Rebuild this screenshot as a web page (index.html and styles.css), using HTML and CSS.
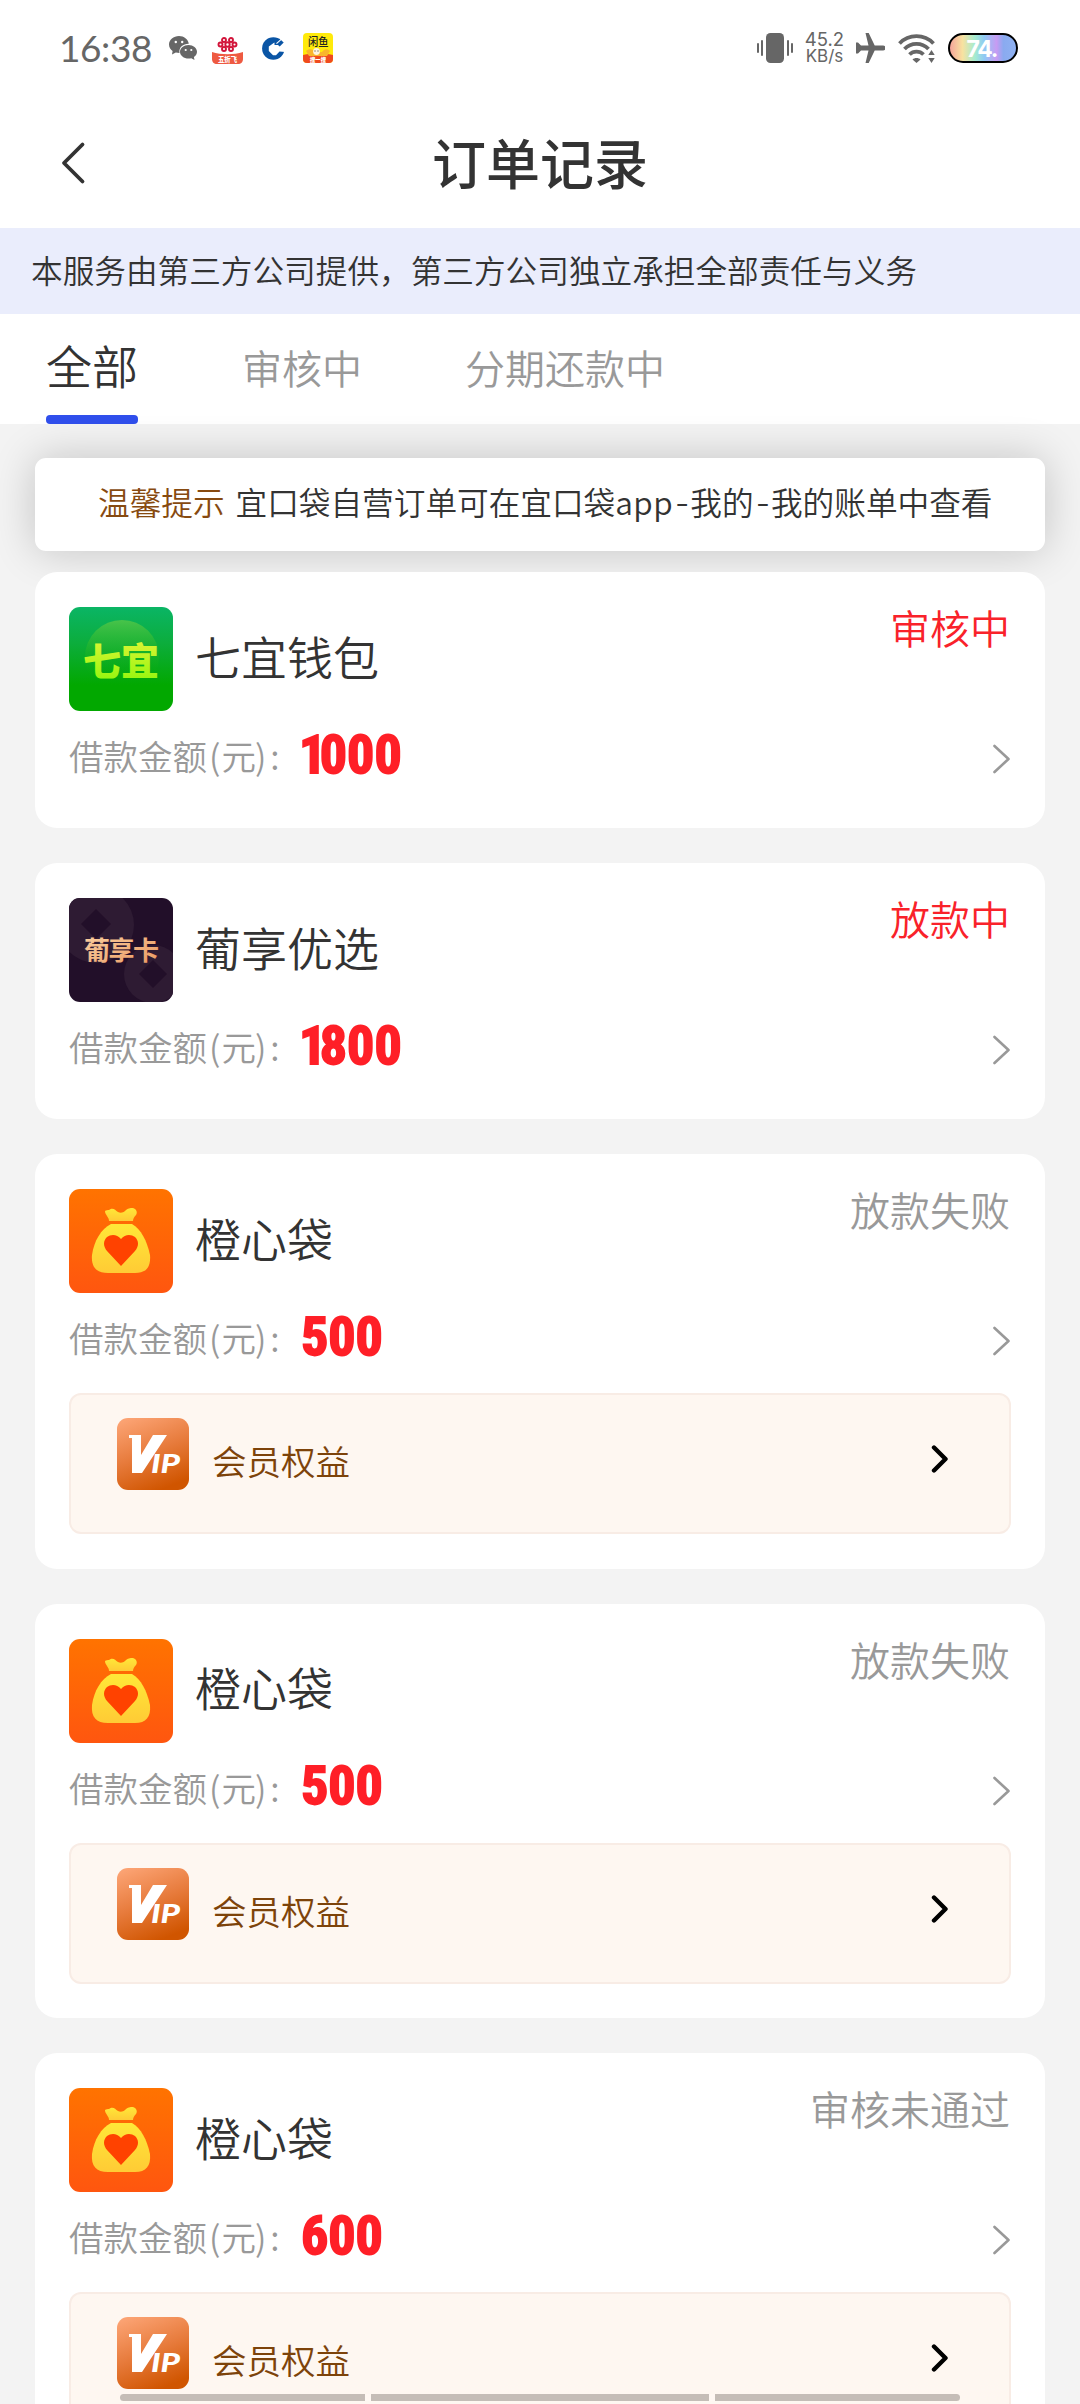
FILE: index.html
```html
<!DOCTYPE html>
<html lang="zh-CN">
<head>
<meta charset="utf-8">
<title>订单记录</title>
<link rel="stylesheet" href="styles.css">
</head>
<body>
<svg class="defs" width="0" height="0" aria-hidden="true">
  <defs>
    <linearGradient id="g-green" x1="0" y1="0" x2="0" y2="1"><stop offset="0" stop-color="#0ab565"/><stop offset=".35" stop-color="#0cad3c"/><stop offset=".75" stop-color="#02a800"/><stop offset="1" stop-color="#02a800"/></linearGradient>
    <linearGradient id="g-halo" x1="0" y1="0" x2="0" y2="1"><stop offset="0" stop-color="#49c34a"/><stop offset=".8" stop-color="#04aa08" stop-opacity="0"/></linearGradient>
    <linearGradient id="g-lime" x1="0" y1="0" x2="0" y2="1"><stop offset="0" stop-color="#ecf43c"/><stop offset="1" stop-color="#8cf60a"/></linearGradient>
    <linearGradient id="g-gold" x1="0" y1="0" x2="1" y2="1"><stop offset="0" stop-color="#fbd3a4"/><stop offset="1" stop-color="#e9965f"/></linearGradient>
    <linearGradient id="g-orange" x1="0" y1="0" x2="0" y2="1"><stop offset="0" stop-color="#ff7300"/><stop offset="1" stop-color="#ff560f"/></linearGradient>
    <linearGradient id="g-bag" x1="0" y1="0" x2="0" y2="1"><stop offset="0" stop-color="#ffe838"/><stop offset="1" stop-color="#ffcb35"/></linearGradient>
    <linearGradient id="g-vip" x1=".2" y1="0" x2=".6" y2="1"><stop offset="0" stop-color="#fba272"/><stop offset=".5" stop-color="#e77b3c"/><stop offset="1" stop-color="#d05500"/></linearGradient>
    <linearGradient id="g-batt"><stop offset="0" stop-color="#f5a09a"/><stop offset=".2" stop-color="#f8e2a0"/><stop offset=".38" stop-color="#a5ecd0"/><stop offset=".52" stop-color="#8fc9f5"/><stop offset=".7" stop-color="#c79bf2"/><stop offset=".8" stop-color="#8aaaf0"/><stop offset="1" stop-color="#8fb2f2"/></linearGradient>
  </defs>
  <symbol id="i-next" viewBox="0 0 18 30"><path d="M1.500 2 15.500 15 1.500 28" fill="none" stroke="#999" stroke-width="2.600" stroke-linecap="round" stroke-linejoin="round"/></symbol>
  <symbol id="i-go" viewBox="0 0 18 30"><path d="M3 3.500 14.500 15 3 26.500" fill="none" stroke="#000" stroke-width="4.400" stroke-linecap="round" stroke-linejoin="round"/></symbol>
  <symbol id="i-bag" viewBox="0 0 104 104">
    <rect width="104" height="104" fill="url(#g-orange)"/>
    <path d="M36 22c1-1 3-1 4-1 4-3 6 0 9 2 2 1 5 1 7-1 3-3 5-3 8-3 3 1 5 4 3 7-2 2-3 4-3 6H40c0-4-4-6-4-10z" fill="url(#g-bag)"/>
    <path d="M42 35h21c9 5 15 17 18 31 1 12-4 18-15 18H39c-12 0-17-6-16-18 2-14 9-26 19-31z" fill="url(#g-bag)"/>
    <path d="M52 77 38 62c-4-5-4-10 0-14 4-3 10-3 14 2 4-5 10-5 14-2 4 4 4 9 0 14z" fill="#ff4200"/>
  </symbol>
</svg>

<header class="top">
  <div class="status-bar">
    <span class="clock">16:38</span>
    <svg class="st-wechat" viewBox="0 0 28 24" width="28" height="24"><g fill="#666"><path d="M10 0C4.500 0 0 3.800 0 8.600c0 2.700 1.500 5 3.600 6.500L3 18.500l3.800-2c1 .3 2.400.5 3.700.5-1-6 4-9.500 9.300-9.300C19 3.200 15 0 10 0z"/><path d="M19.500 9c-4.700 0-8.500 3-8.500 6.800s3.800 6.800 8.500 6.800c1 0 2-.1 2.800-.4L25.500 24l-.6-3c1.900-1.300 3.100-3.100 3.100-5.200C28 12 24.200 9 19.500 9z"/></g><g fill="#fff"><circle cx="6.800" cy="6" r="1.200"/><circle cx="13.200" cy="6" r="1.200"/><circle cx="16.700" cy="14" r="1.100"/><circle cx="22.300" cy="14" r="1.100"/></g></svg>
    <svg class="st-unicom" viewBox="0 0 31 27" width="31" height="27"><g fill="none" stroke="#d2143a" stroke-width="1.900"><circle cx="12" cy="3" r="2"/><circle cx="19" cy="3" r="2"/><circle cx="8.500" cy="7.500" r="2"/><circle cx="15.500" cy="7.500" r="2.200"/><circle cx="22.500" cy="7.500" r="2"/><circle cx="12" cy="12" r="2"/><circle cx="19" cy="12" r="2"/></g><path d="M0 15c9 3 22 3 31 0v7c0 3-2 5-5 5H5c-3 0-5-2-5-5z" fill="#ee5a42"/><text x="6" y="25" font-family="Noto Sans CJK SC, sans-serif" font-size="7" font-weight="900" textLength="19" lengthAdjust="spacingAndGlyphs" fill="#fff">五折飞</text></svg>
    <svg class="st-ccb" viewBox="0 0 23 23" width="23" height="23"><circle cx="11.300" cy="11.500" r="11.200" fill="#0a55a5"/><path d="M12 5.800h5.500L23 6v9l-5.500-.5-3.500 3.700h-3L6.800 14V9.500z" fill="#fff"/><path d="M12.500 5.500 17 1.600l4.700 4-4 4-1.700-1.500h-3.500z" fill="#0a55a5"/><path d="m14.500 6.700 5.500-5" stroke="#fff" stroke-width="1.100"/></svg>
    <svg class="st-fish" viewBox="0 0 30 30" width="30" height="30"><rect width="30" height="30" rx="4" fill="#ffea0b"/><path d="M0 22c9-2 21-2 30 0v4a4 4 0 0 1-4 4H4a4 4 0 0 1-4-4z" fill="#f04a1e"/><path d="M3 18c3-3 7-2 9 1h7c2-3 5-4 8-1l-3 5H6z" fill="#f9b52c"/><circle cx="13.500" cy="18.500" r="3.400" fill="#fff4df"/><path d="M11.500 18h1M14.500 18h1" stroke="#333"/><text x="5" y="13" textLength="20.500" lengthAdjust="spacingAndGlyphs" font-family="Noto Sans CJK SC, sans-serif" font-size="11" font-weight="500" fill="#222">闲鱼</text><text x="7" y="28.500" textLength="16" lengthAdjust="spacingAndGlyphs" font-family="Noto Sans CJK SC, sans-serif" font-size="6" font-weight="900" fill="#fff">搜一搜</text></svg>
    <svg class="st-vib" viewBox="0 0 36 30" width="36" height="30"><rect x="9" width="18" height="30" rx="4.500" fill="#666"/><path d="M1 11v8M5 8v14M31 8v14M35 11v8" stroke="#666" stroke-width="2" stroke-linecap="round"/></svg>
    <div class="speed"><span>45.2</span><span class="unit">KB/s</span></div>
    <svg class="st-plane" viewBox="0 0 29 30" width="29" height="30"><path d="M9.500 0h3.200l6 12.500H27a2.400 2.400 0 0 1 0 5h-8.300l-6 12.500H9.500l3-12.500H5L2 20.500H0V9.500h2L5 12.500h7.500z" fill="#666"/></svg>
    <svg class="st-wifi" viewBox="0 0 37 29" width="37" height="29"><g fill="none" stroke="#666" stroke-width="3.800"><path d="M1.500 9.500a23.500 23.500 0 0 1 34 0"/><path d="M6.500 15a16.500 16.500 0 0 1 24 0"/><path d="M11.500 20.500a10 10 0 0 1 14 0"/></g><path d="M14.500 25.500c2-2 6-2 8 0L18.500 29z" fill="#666"/><circle cx="33" cy="22" r="6" fill="#fff"/><path d="m33.500 16 3.200 5h-6.400zM33.500 29l3.200-5h-6.400z" fill="#666"/></svg>
    <svg class="st-batt" viewBox="0 0 70 30" width="70" height="30"><rect x="1" y="1" width="68" height="28" rx="14" fill="url(#g-batt)" stroke="#000" stroke-width="2"/><text x="18.500" y="23.500" font-family="Inter, sans-serif" font-size="23" font-weight="700" fill="#fff" textLength="32">74.</text></svg>
  </div>
  <div class="nav">
    <svg class="back" viewBox="0 0 26 44" width="26" height="44"><path d="M22.500 3.500 4 22l18.500 18.500" fill="none" stroke="#333" stroke-width="3.800" stroke-linecap="round" stroke-linejoin="round"/></svg>
    <h1 class="title">订单记录</h1>
  </div>
</header>
<div class="notice">本服务由第三方公司提供，第三方公司独立承担全部责任与义务</div>
<nav class="tabs">
  <span class="tab tab-on">全部</span>
  <span class="tab">审核中</span>
  <span class="tab">分期还款中</span>
</nav>

<main class="list">
  <div class="tip"><span class="tip-key">温馨提示</span><span class="tip-text">宜口袋自营订单可在宜口袋<span class="latin">app</span><span class="dash">-</span>我的<span class="dash">-</span>我的账单中查看</span></div>

  <section class="card">
    <div class="head">
      <svg class="logo" viewBox="0 0 104 104"><rect width="104" height="104" fill="url(#g-green)"/><circle cx="53" cy="50" r="37" fill="url(#g-halo)"/><text x="14" y="68" textLength="76" font-family="Noto Sans CJK SC, sans-serif" font-size="38" font-weight="800" fill="url(#g-lime)">七宜</text></svg>
      <h2 class="name">七宜钱包</h2><span class="state state-red">审核中</span>
    </div>
    <div class="row"><span class="label">借款金额<span class="open">(</span>元<span class="close">)</span><span class="colon">:</span></span><b class="sum"><span class="one">1</span>000</b><svg class="next"><use href="#i-next"/></svg></div>
  </section>

  <section class="card">
    <div class="head">
      <svg class="logo" viewBox="0 0 104 104"><rect width="104" height="104" fill="#220f29"/><circle cx="27" cy="27" r="38" fill="#2e1b33"/><path d="m27 11 15 15-15 15-15-15z" fill="#220f29"/><circle cx="84" cy="76" r="29" fill="#2e1b33"/><path d="m84 62 14 14-14 14-14-14z" fill="#220f29"/><text x="15" y="62" textLength="75" font-family="Noto Sans CJK SC, sans-serif" font-size="26" font-weight="600" fill="url(#g-gold)">葡享卡</text></svg>
      <h2 class="name">葡享优选</h2><span class="state state-red">放款中</span>
    </div>
    <div class="row"><span class="label">借款金额<span class="open">(</span>元<span class="close">)</span><span class="colon">:</span></span><b class="sum"><span class="one">1</span>800</b><svg class="next"><use href="#i-next"/></svg></div>
  </section>

  <section class="card card-vip">
    <div class="head">
      <svg class="logo"><use href="#i-bag"/></svg>
      <h2 class="name">橙心袋</h2><span class="state">放款失败</span>
    </div>
    <div class="row"><span class="label">借款金额<span class="open">(</span>元<span class="close">)</span><span class="colon">:</span></span><b class="sum">500</b><svg class="next"><use href="#i-next"/></svg></div>
    <div class="vip"><svg class="vip-logo" viewBox="0 0 72 72"><rect width="72" height="72" rx="11" fill="url(#g-vip)"/><path d="M12 17h12v20l12-20h14L25 55H15V20h-3z" fill="#fff"/><text class="ip" x="34" y="55" textLength="29" lengthAdjust="spacingAndGlyphs">IP</text></svg><span class="vip-name">会员权益</span><svg class="go"><use href="#i-go"/></svg></div>
  </section>

  <section class="card card-vip">
    <div class="head">
      <svg class="logo"><use href="#i-bag"/></svg>
      <h2 class="name">橙心袋</h2><span class="state">放款失败</span>
    </div>
    <div class="row"><span class="label">借款金额<span class="open">(</span>元<span class="close">)</span><span class="colon">:</span></span><b class="sum">500</b><svg class="next"><use href="#i-next"/></svg></div>
    <div class="vip"><svg class="vip-logo" viewBox="0 0 72 72"><rect width="72" height="72" rx="11" fill="url(#g-vip)"/><path d="M12 17h12v20l12-20h14L25 55H15V20h-3z" fill="#fff"/><text class="ip" x="34" y="55" textLength="29" lengthAdjust="spacingAndGlyphs">IP</text></svg><span class="vip-name">会员权益</span><svg class="go"><use href="#i-go"/></svg></div>
  </section>

  <section class="card card-vip">
    <div class="head">
      <svg class="logo"><use href="#i-bag"/></svg>
      <h2 class="name">橙心袋</h2><span class="state">审核未通过</span>
    </div>
    <div class="row"><span class="label">借款金额<span class="open">(</span>元<span class="close">)</span><span class="colon">:</span></span><b class="sum">600</b><svg class="next"><use href="#i-next"/></svg></div>
    <div class="vip"><svg class="vip-logo" viewBox="0 0 72 72"><rect width="72" height="72" rx="11" fill="url(#g-vip)"/><path d="M12 17h12v20l12-20h14L25 55H15V20h-3z" fill="#fff"/><text class="ip" x="34" y="55" textLength="29" lengthAdjust="spacingAndGlyphs">IP</text></svg><span class="vip-name">会员权益</span><svg class="go"><use href="#i-go"/></svg></div>
  </section>
</main>
<div class="gesture"><i class="seg seg-first"></i><i class="seg"></i><i class="seg seg-last"></i></div>
</body>
</html>
```

FILE: styles.css
```css
* { box-sizing: border-box; }
html, body { margin: 0; height: 2404px; overflow: hidden; }
body {
  width: 1080px;
  background: #f3f3f3;
  color: #333;
  font-family: "Noto Sans CJK SC", sans-serif;
  font-weight: 350;
}
svg { display: block; flex: none; }
.defs { position: absolute; }

.top { height: 228px; background: #fff; }
.status-bar { height: 96px; padding-left: 59px; display: flex; align-items: center; color: #666; }
.clock { width: 110px; font: 400 37px/40px Lato, sans-serif; letter-spacing: -.4px; }
.st-unicom { margin: 4px 0 0 15px; }
.st-ccb { margin-left: 19px; }
.st-fish { margin-left: 18px; }
.st-vib { margin-left: 424px; }
.speed { width: 39px; margin-left: 12px; display: flex; flex-direction: column; align-items: center; white-space: nowrap; font: 400 18.500px/17px Inter, sans-serif; }
.unit { font-size: 17px; }
.st-plane { margin-left: 12px; }
.st-wifi { margin-left: 13px; }
.st-batt { margin-left: 13px; }

.nav { height: 132px; padding: 0 60px 1px; display: grid; grid-template-columns: 40px 1fr 40px; align-items: center; }
.back { margin-top: 3px; }
.title { margin: 0; text-align: center; font-size: 54px; line-height: 80px; font-weight: 500; }

.notice { height: 86px; padding-left: 31px; background: #eaedfc; font-size: 31.650px; line-height: 83px; white-space: nowrap; }

.tabs { height: 110px; padding-left: 46px; display: flex; gap: 104px; background: #fff; }
.tab { height: 110px; font-size: 40px; line-height: 106px; color: #999; }
.tab:last-child { margin-left: -1px; }
.tab-on { display: flex; flex-direction: column; color: #333; font-size: 46px; line-height: 101px; }
.tab-on::after { content: ""; height: 9px; border-radius: 4px; background: #304fec; flex: none; }

.list { padding: 34px 35px 0; display: flex; flex-direction: column; gap: 35px; }
.tip { height: 93px; margin-bottom: -14px; padding-left: 63px; display: flex; gap: 11px; border-radius: 11px; background: #fff; box-shadow: 0 0 44px rgba(0, 0, 0, .2); font-size: 31.650px; line-height: 87px; white-space: nowrap; }
.tip-key { color: #874a10; }
.latin { letter-spacing: .4px; }
.dash { font-family: Inter, sans-serif; padding: 0 1px 0 2px; }

.card { height: 256px; flex: none; padding: 35px 34px 0; border-radius: 22px; background: #fff; position: relative; }
.card-vip { height: 414.600px; }
.head { height: 104px; display: flex; align-items: center; }
.logo { width: 104px; height: 104px; border-radius: 11px; }
.name { margin: 0 auto 0 22px; font-size: 46px; line-height: 60px; font-weight: 350; padding-bottom: 9px; }
.state { align-self: flex-start; font-size: 40px; line-height: 50px; margin: -5px 1px 0 0; color: #999; }
.state-red { color: #f9222a; }

.row { height: 64px; margin-top: 16px; display: flex; align-items: center; }
.label { width: 232px; padding-bottom: 7px; font-size: 34.500px; line-height: 57px; color: #999; white-space: nowrap; }
.open { padding: 0 1px 0 2px; }
.close { margin-left: -1px; }
.colon { padding-left: 4px; }
.sum { width: 200px; padding-bottom: 9px; color: #ff1f27; font: 700 54px/56px Roboto, sans-serif; font-stretch: 75%; -webkit-text-stroke: 1.800px #ff1f27; }
.one { margin-left: -2px; letter-spacing: -6.500px; }
.next { width: 18px; height: 30px; margin-left: auto; }

.vip { height: 141px; margin-top: 20px; padding: 25px 57px 0 46px; display: flex; align-items: flex-start; border: 2px solid #f8ece5; border-radius: 12px; background: #fef7f1; }
.vip-logo { width: 72px; height: 72px; margin-top: -2px; }
.ip { font: italic 900 26px Lato, sans-serif; fill: #fff; }
.vip-name { margin: 15px 0 0 23px; color: #7d430a; font-size: 34.500px; line-height: 50px; }
.go { width: 18px; height: 30px; margin: 24px 3px 0 auto; }

/* System gesture hint floating over the list */
.gesture { position: absolute; left: 120px; top: 2394px; width: 840px; height: 7px; display: grid; grid-template-columns: 245px 338px 245px; gap: 6px; background: #fff8f3; border-radius: 4px; }
.seg { background: #c5bdb7; }
.seg-first { border-radius: 4px 0 0 4px; }
.seg-last { border-radius: 0 4px 4px 0; }
```
